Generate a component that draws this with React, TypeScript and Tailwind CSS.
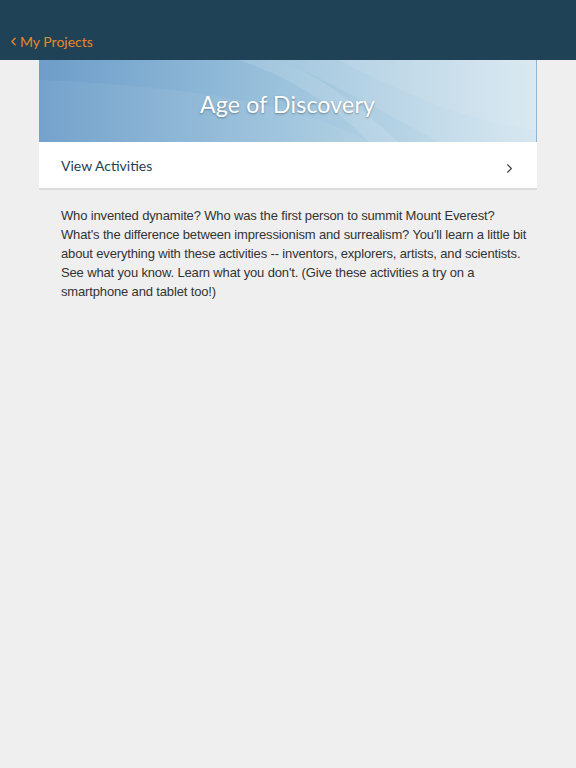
import { ChevronLeft, ChevronRight } from "lucide-react";

// Lignes du texte telles qu'elles sont coupees dans l'ecran
const DESCRIPTION_LINES = [
  "Who invented dynamite? Who was the first person to summit Mount Everest?",
  "What's the difference between impressionism and surrealism? You'll learn a little bit",
  "about everything with these activities -- inventors, explorers, artists, and scientists.",
  "See what you know. Learn what you don't. (Give these activities a try on a",
  "smartphone and tablet too!)",
];

// Bandeau avec les vagues claires
function Banner() {
  return (
    <div className="relative h-[82px] overflow-hidden border-r border-[#8fb6d3] bg-gradient-to-r from-[#6d9dc9] via-[#9cc3dc] to-[#d3e5ef]">
      <svg
        className="absolute inset-0 h-full w-full"
        viewBox="0 0 498 82"
        preserveAspectRatio="none"
      >
        <path d="M0 20 C 120 25, 260 40, 330 82 L 0 82 Z" fill="#ffffff" opacity="0.06" />
        <path d="M200 0 C 260 20, 300 50, 330 82 L 360 82 C 320 45, 280 15, 240 0 Z" fill="#ffffff" opacity="0.12" />
        <path d="M240 0 C 300 25, 360 60, 400 82 L 498 82 L 498 0 Z" fill="#ffffff" opacity="0.1" />
        <path d="M300 0 C 360 30, 420 60, 498 70 L 498 0 Z" fill="#ffffff" opacity="0.08" />
      </svg>
      <div className="relative flex h-full items-center justify-center pt-[6px]">
        <h1 className="text-[23px] tracking-[0.2px] text-white [text-shadow:0_1px_2px_rgba(0,0,0,0.35)]">
          Age of Discovery
        </h1>
      </div>
    </div>
  );
}

export default function App() {
  return (
    <div className="min-h-[768px] bg-[#efefef] font-['Lato','Open_Sans',sans-serif]">
      {/* Barre de navigation */}
      <header className="flex h-[60px] items-end bg-[#1f4256] px-[7px] pb-[8px]">
        <button className="flex items-center text-[14px] text-[#e8872a]">
          <ChevronLeft className="h-[13px] w-[13px]" strokeWidth={2.5} />
          <span>My Projects</span>
        </button>
      </header>

      <div className="mx-[39px]">
        <Banner />
        <div className="flex h-[48px] items-center justify-between border-b-2 border-[#dcdcdc] bg-white pl-[22px] pr-[20px]">
          <span className="text-[14px] text-[#1f3f54]">View Activities</span>
          <ChevronRight className="mt-[6px] h-[15px] w-[15px] text-[#444]" strokeWidth={1.8} />
        </div>
      </div>

      <div className="pl-[61px] pt-[16px] font-['Liberation_Sans',Arial,sans-serif] text-[13px] leading-[19px] text-[#333]">
        {DESCRIPTION_LINES.map((line) => (
          <p key={line} className="whitespace-nowrap tracking-[-0.15px]">
            {line}
          </p>
        ))}
      </div>
    </div>
  );
}
